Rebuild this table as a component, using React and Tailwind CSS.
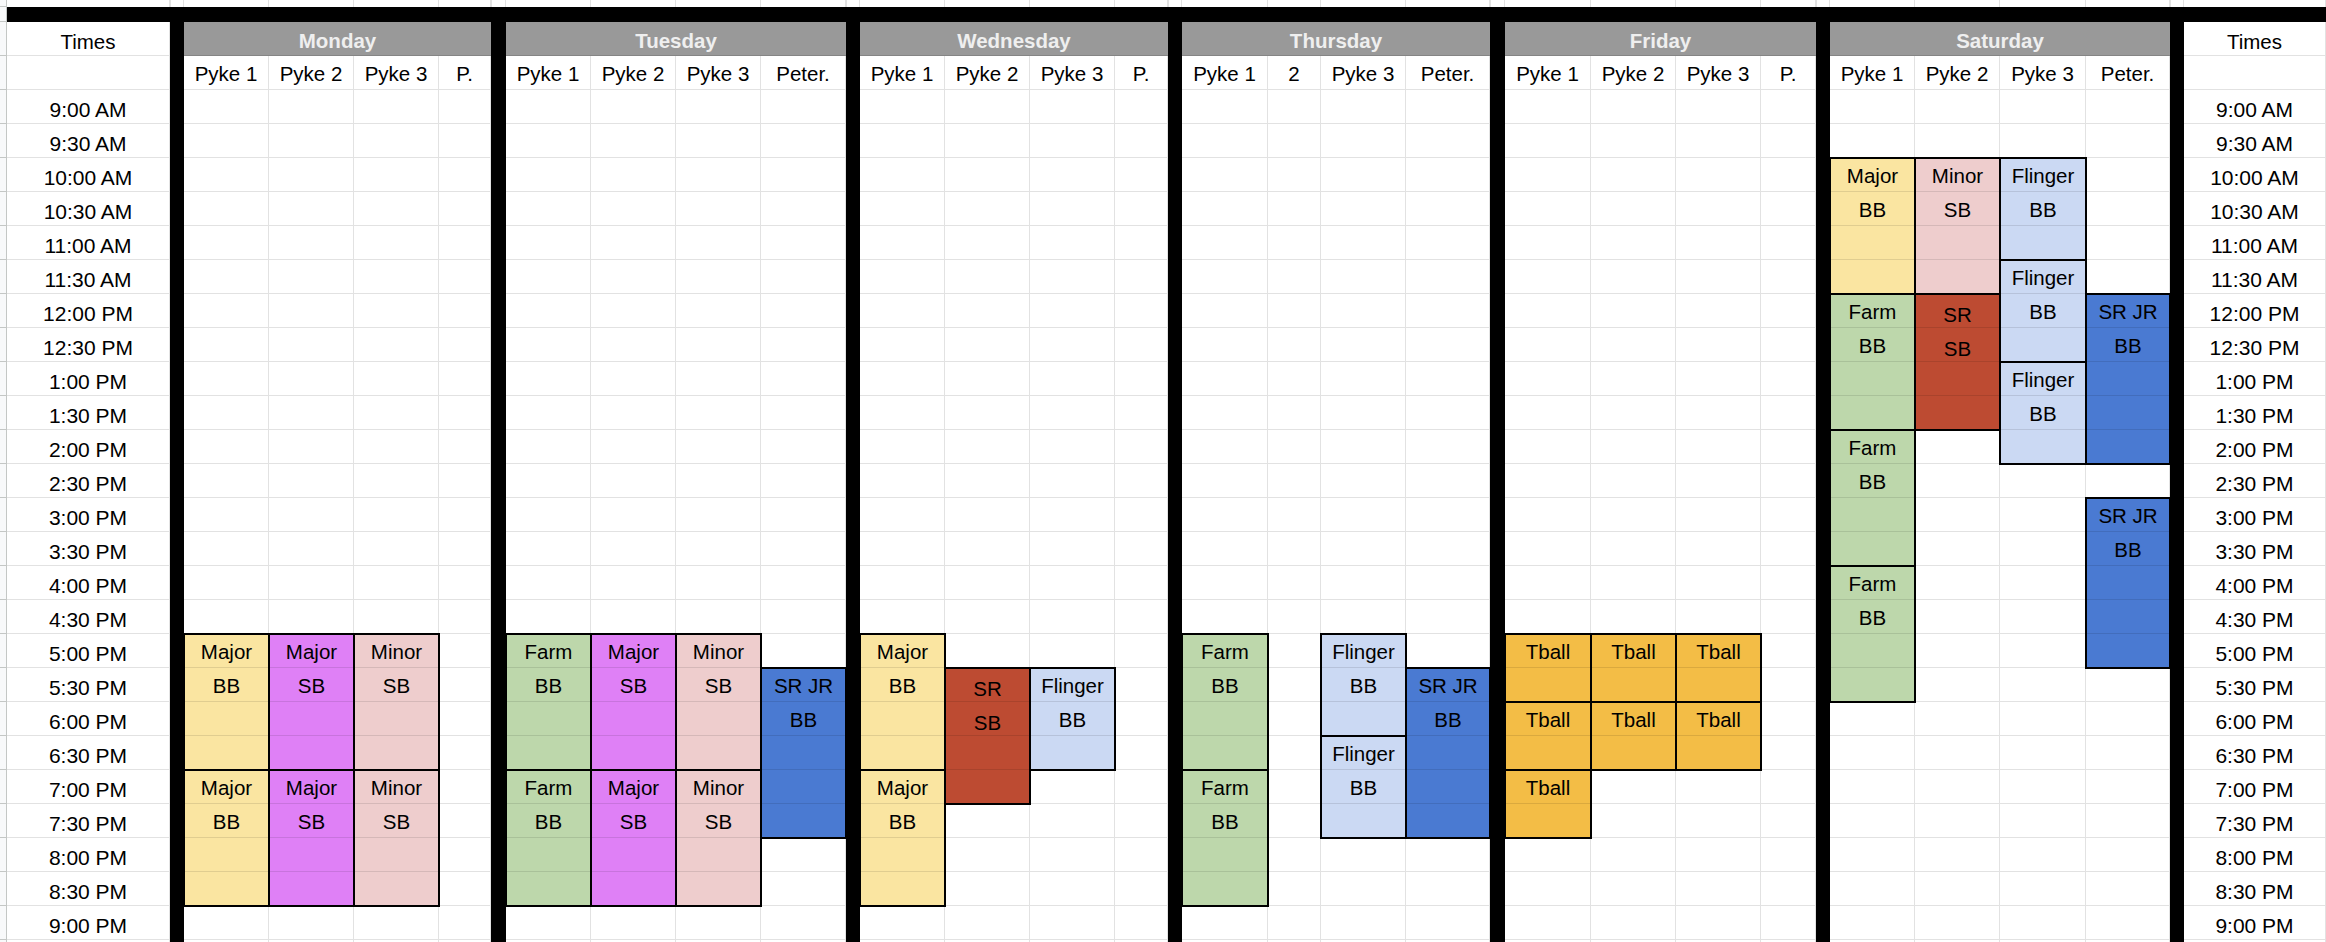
import React from 'react';

const FILL = {
  yellow: 'bg-[#fae5a1]',
  purple: 'bg-[#df80f6]',
  pink: 'bg-[#eecdcd]',
  green: 'bg-[#bdd7ab]',
  lblue: 'bg-[#cbd9f3]',
  blue: 'bg-[#4a7ad2]',
  red: 'bg-[#bd4b32]',
  orange: 'bg-[#f3bd46]',
};

const HEIGHT = { 2: 'h-[68px]', 3: 'h-[102px]', 4: 'h-[136px]', 5: 'h-[170px]' };

const b = (start, len, color, a, second) => ({ start, len, color, t: second ? [a, second] : [a] });

const days = [
  {
    name: 'Monday',
    w: 'w-[307px]',
    cols: [
      { label: 'Pyke 1', w: 'w-[85px]', blocks: [b(16, 4, 'yellow', 'Major', 'BB'), b(20, 4, 'yellow', 'Major', 'BB')] },
      { label: 'Pyke 2', w: 'w-[85px]', blocks: [b(16, 4, 'purple', 'Major', 'SB'), b(20, 4, 'purple', 'Major', 'SB')] },
      { label: 'Pyke 3', w: 'w-[85px]', blocks: [b(16, 4, 'pink', 'Minor', 'SB'), b(20, 4, 'pink', 'Minor', 'SB')] },
      { label: 'P.', w: 'w-[52px]', blocks: [] },
    ],
  },
  {
    name: 'Tuesday',
    w: 'w-[340px]',
    cols: [
      { label: 'Pyke 1', w: 'w-[85px]', blocks: [b(16, 4, 'green', 'Farm', 'BB'), b(20, 4, 'green', 'Farm', 'BB')] },
      { label: 'Pyke 2', w: 'w-[85px]', blocks: [b(16, 4, 'purple', 'Major', 'SB'), b(20, 4, 'purple', 'Major', 'SB')] },
      { label: 'Pyke 3', w: 'w-[85px]', blocks: [b(16, 4, 'pink', 'Minor', 'SB'), b(20, 4, 'pink', 'Minor', 'SB')] },
      { label: 'Peter.', w: 'w-[85px]', blocks: [b(17, 5, 'blue', 'SR JR', 'BB')] },
    ],
  },
  {
    name: 'Wednesday',
    w: 'w-[308px]',
    cols: [
      { label: 'Pyke 1', w: 'w-[85px]', blocks: [b(16, 4, 'yellow', 'Major', 'BB'), b(20, 4, 'yellow', 'Major', 'BB')] },
      { label: 'Pyke 2', w: 'w-[85px]', blocks: [b(17, 4, 'red', 'SR', 'SB')] },
      { label: 'Pyke 3', w: 'w-[85px]', blocks: [b(17, 3, 'lblue', 'Flinger', 'BB')] },
      { label: 'P.', w: 'w-[53px]', blocks: [] },
    ],
  },
  {
    name: 'Thursday',
    w: 'w-[308px]',
    cols: [
      { label: 'Pyke 1', w: 'w-[86px]', blocks: [b(16, 4, 'green', 'Farm', 'BB'), b(20, 4, 'green', 'Farm', 'BB')] },
      { label: '2', w: 'w-[53px]', blocks: [] },
      { label: 'Pyke 3', w: 'w-[85px]', blocks: [b(16, 3, 'lblue', 'Flinger', 'BB'), b(19, 3, 'lblue', 'Flinger', 'BB')] },
      { label: 'Peter.', w: 'w-[84px]', blocks: [b(17, 5, 'blue', 'SR JR', 'BB')] },
    ],
  },
  {
    name: 'Friday',
    w: 'w-[311px]',
    cols: [
      { label: 'Pyke 1', w: 'w-[86px]', blocks: [b(16, 2, 'orange', 'Tball'), b(18, 2, 'orange', 'Tball'), b(20, 2, 'orange', 'Tball')] },
      { label: 'Pyke 2', w: 'w-[85px]', blocks: [b(16, 2, 'orange', 'Tball'), b(18, 2, 'orange', 'Tball')] },
      { label: 'Pyke 3', w: 'w-[85px]', blocks: [b(16, 2, 'orange', 'Tball'), b(18, 2, 'orange', 'Tball')] },
      { label: 'P.', w: 'w-[55px]', blocks: [] },
    ],
  },
  {
    name: 'Saturday',
    w: 'w-[340px]',
    cols: [
      {
        label: 'Pyke 1',
        w: 'w-[85px]',
        blocks: [b(2, 4, 'yellow', 'Major', 'BB'), b(6, 4, 'green', 'Farm', 'BB'), b(10, 4, 'green', 'Farm', 'BB'), b(14, 4, 'green', 'Farm', 'BB')],
      },
      { label: 'Pyke 2', w: 'w-[85px]', blocks: [b(2, 4, 'pink', 'Minor', 'SB'), b(6, 4, 'red', 'SR', 'SB')] },
      {
        label: 'Pyke 3',
        w: 'w-[86px]',
        blocks: [b(2, 3, 'lblue', 'Flinger', 'BB'), b(5, 3, 'lblue', 'Flinger', 'BB'), b(8, 3, 'lblue', 'Flinger', 'BB')],
      },
      { label: 'Peter.', w: 'w-[84px]', blocks: [b(6, 5, 'blue', 'SR JR', 'BB'), b(12, 5, 'blue', 'SR JR', 'BB')] },
    ],
  },
];

const TIMES = Array.from({ length: 25 }, (_, i) => {
  const mins = 9 * 60 + 30 * i;
  const h = Math.floor(mins / 60);
  const m = mins % 60;
  const h12 = h > 12 ? h - 12 : h;
  return `${h12}:${m === 0 ? '00' : '30'} ${h >= 12 ? 'PM' : 'AM'}`;
});

const GRID = 'border-[#e2e2e2]';

function Block({ blk }) {
  const low = blk.color === 'red';
  return (
    <div
      className={`relative shrink-0 flex flex-col border border-black shadow-[0_0_0_1px_#000] ${HEIGHT[blk.len]} ${FILL[blk.color]}`}
    >
      {Array.from({ length: blk.len }).map((_, i) => {
        const last = i === blk.len - 1;
        return (
          <div
            key={i}
            className={`flex items-end justify-center whitespace-nowrap ${low ? 'pb-[1px]' : 'pb-[4px]'} ${
              last ? 'flex-1' : 'shrink-0 border-b border-black/10'
            } ${!last && i === 0 ? 'h-[33px]' : ''} ${!last && i > 0 ? 'h-[34px]' : ''}`}
          >
            {blk.t[i] || ''}
          </div>
        );
      })}
    </div>
  );
}

function SubCol({ col }) {
  const segs = [];
  let r = 0;
  while (r < 26) {
    const blk = col.blocks.find((x) => x.start === r);
    if (blk) {
      segs.push(<Block key={r} blk={blk} />);
      r += blk.len;
    } else {
      segs.push(<div key={r} className={`h-[34px] shrink-0 border-b border-r ${GRID}`} />);
      r += 1;
    }
  }
  return (
    <div className={`${col.w} shrink-0 flex flex-col`}>
      <div className={`h-[34px] shrink-0 border-b border-r ${GRID} flex items-end justify-center pb-[4px] whitespace-nowrap`}>
        {col.label}
      </div>
      {segs}
    </div>
  );
}

function Day({ day }) {
  return (
    <div className={`${day.w} shrink-0 flex flex-col`}>
      <div className="flex h-[7px] shrink-0">
        {day.cols.map((c, i) => (
          <div key={i} className={`${c.w} shrink-0 border-r ${GRID}`} />
        ))}
      </div>
      <div className="h-[15px] shrink-0 bg-black" />
      <div className="h-[34px] shrink-0 bg-[#999999] border-b border-[#858585] flex items-end justify-center pb-[3px] font-bold text-[#efefef]">
        {day.name}
      </div>
      <div className="flex">
        {day.cols.map((c, i) => (
          <SubCol key={i} col={c} />
        ))}
      </div>
    </div>
  );
}

function Bar({ w }) {
  return (
    <div className={`${w} shrink-0 h-[942px] flex flex-col`}>
      <div className={`h-[7px] shrink-0 border-x ${GRID}`} />
      <div className="flex-1 bg-black" />
    </div>
  );
}

function TimeCell({ children, big }) {
  return (
    <div
      className={`h-[34px] shrink-0 border-b border-r ${GRID} flex items-end justify-center pb-[2px] whitespace-nowrap ${
        big ? 'text-[21px]' : ''
      }`}
    >
      {children}
    </div>
  );
}

function TimesCol({ w }) {
  return (
    <div className={`${w} shrink-0 flex flex-col`}>
      <div className={`h-[7px] shrink-0 border-r ${GRID}`} />
      <div className="h-[15px] shrink-0 bg-black" />
      <TimeCell>Times</TimeCell>
      <TimeCell />
      {TIMES.map((t) => (
        <TimeCell key={t} big>
          {t}
        </TimeCell>
      ))}
      <TimeCell />
    </div>
  );
}

function RowHeader() {
  return (
    <div className="w-[7px] shrink-0 h-[942px] flex flex-col bg-[#f8f9fa] border-r border-[#c4c7c5]">
      <div className="h-[7px] shrink-0 border-b border-[#c4c7c5]" />
      <div className="h-[15px] shrink-0 border-b border-[#c4c7c5]" />
      {Array.from({ length: 28 }).map((_, i) => (
        <div key={i} className="h-[34px] shrink-0 border-b border-[#c4c7c5]" />
      ))}
    </div>
  );
}

export default function App() {
  return (
    <div className="w-[2326px] h-[942px] overflow-hidden bg-white flex items-start font-['Liberation_Sans',Arial,sans-serif] text-black text-[20.5px] leading-[23px]">
      <RowHeader />
      <TimesCol w="w-[163px]" />
      <Bar w="w-[14px]" />
      <Day day={days[0]} />
      <Bar w="w-[15px]" />
      <Day day={days[1]} />
      <Bar w="w-[14px]" />
      <Day day={days[2]} />
      <Bar w="w-[14px]" />
      <Day day={days[3]} />
      <Bar w="w-[15px]" />
      <Day day={days[4]} />
      <Bar w="w-[14px]" />
      <Day day={days[5]} />
      <Bar w="w-[14px]" />
      <TimesCol w="w-[142px]" />
    </div>
  );
}
